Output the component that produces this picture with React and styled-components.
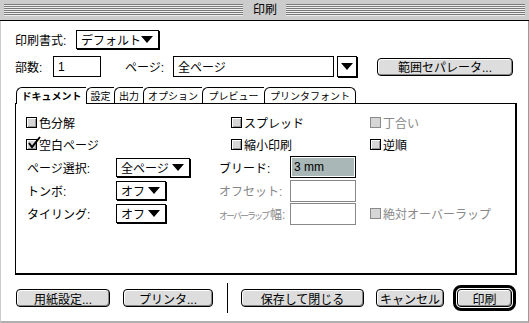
import React from "react";
import styled, { createGlobalStyle } from "styled-components";

const GlobalStyle = createGlobalStyle`
  html, body {
    margin: 0;
    padding: 0;
    background: #fff;
  }
  body {
    font-family: "Liberation Sans", "Noto Sans CJK JP", sans-serif;
    font-size: 12px;
    color: #000;
  }
`;

function Checkbox({ label, checked, disabled }) {
  return (
    <Check disabled={disabled}>
      <Box disabled={disabled}>
        {checked && (
          <Tick viewBox="0 0 14 14" width="14" height="14">
            <path d="M2 7 L5 11 L13 1" fill="none" stroke="#000" strokeWidth="2" />
          </Tick>
        )}
      </Box>
      {label}
    </Check>
  );
}

function Select({ value, width }) {
  return (
    <Popup width={width}>
      <span>{value}</span>
      <Arrow />
    </Popup>
  );
}

const tabs = [
  { name: "ドキュメント", width: 70, active: true },
  { name: "設定", width: 28 },
  { name: "出力", width: 29 },
  { name: "オプション", width: 59 },
  { name: "プレビュー", width: 62 },
  { name: "プリンタフォント", width: 92 },
];

function App() {
  return (
    <Window>
      <GlobalStyle />
      <TitleBar>
        <Stripes />
        <Title>印刷</Title>
        <Stripes />
      </TitleBar>
      <Body>
        <Row top={9}>
          <Label width={61}>印刷書式:</Label>
          <Select value="デフォルト" width={83} />
        </Row>
        <Row top={7}>
          <Label width={38}>部数:</Label>
          <TextBox width={48}>1</TextBox>
          <Label width={48} style={{ marginLeft: 24 }}>ページ:</Label>
          <TextBox width={161}>全ページ</TextBox>
          <ArrowBox>
            <Arrow />
          </ArrowBox>
          <Button width={136} style={{ marginLeft: 20 }}>範囲セパレータ...</Button>
        </Row>
        <TabBar>
          {tabs.map((t, i) => (
            <Tab key={t.name} width={t.width} active={t.active} last={i === tabs.length - 1}>
              {t.name}
            </Tab>
          ))}
        </TabBar>
        <Panel>
          <Grid>
            <Cell><Checkbox label="色分解" /></Cell>
            <Cell><Checkbox label="スプレッド" /></Cell>
            <Cell><Checkbox label="丁合い" disabled /></Cell>

            <Cell><Checkbox label="空白ページ" checked /></Cell>
            <Cell><Checkbox label="縮小印刷" /></Cell>
            <Cell><Checkbox label="逆順" /></Cell>

            <Cell>
              <FieldLabel width={90}>ページ選択:</FieldLabel>
              <Select value="全ページ" width={74} />
            </Cell>
            <Cell outdent>
              <FieldLabel width={72}>ブリード:</FieldLabel>
              <Input selected>3 mm</Input>
            </Cell>
            <Cell />

            <Cell>
              <FieldLabel width={90}>トンボ:</FieldLabel>
              <Select value="オフ" width={50} />
            </Cell>
            <Cell outdent>
              <FieldLabel width={72} disabled>オフセット:</FieldLabel>
              <Input disabled />
            </Cell>
            <Cell />

            <Cell>
              <FieldLabel width={90}>タイリング:</FieldLabel>
              <Select value="オフ" width={50} />
            </Cell>
            <Cell outdent>
              <FieldLabel width={72} disabled>
                <Tiny>オーバーラップ</Tiny>幅:
              </FieldLabel>
              <Input disabled />
            </Cell>
            <Cell><Checkbox label="絶対オーバーラップ" disabled /></Cell>
          </Grid>
        </Panel>
        <ButtonRow>
          <Button width={94}>用紙設定...</Button>
          <Button width={90} style={{ marginLeft: 13 }}>プリンタ...</Button>
          <Separator />
          <Button width={123}>保存して閉じる</Button>
          <Button width={68} style={{ marginLeft: 12 }}>キャンセル</Button>
          <DefaultRing>
            <Button width={55}>印刷</Button>
          </DefaultRing>
        </ButtonRow>
      </Body>
    </Window>
  );
}

export default App;

const Window = styled.div`
  width: 529px;
  height: 323px;
  box-sizing: border-box;
  display: flex;
  flex-direction: column;
  overflow: hidden;
`;

const TitleBar = styled.div`
  height: 20px;
  flex: none;
  background: #cccccc;
  border-bottom: 1px solid #000;
  display: flex;
  align-items: center;
  padding: 0 4px;
`;

const Stripes = styled.div`
  flex: 1;
  height: 12px;
  background: repeating-linear-gradient(to bottom, #7a7a7a 0 1px, #eeeeee 1px 2px);
`;

const Title = styled.div`
  padding: 0 9px 0 10px;
  font-size: 12px;
  line-height: 1;
`;

const Body = styled.div`
  flex: 1;
  background: #fff;
  border-left: 1px solid #cccccc;
  border-right: 1px solid #9a9a9a;
  border-bottom: 2px solid #b0b0b0;
  padding-left: 14px;
  display: flex;
  flex-direction: column;
`;

const Row = styled.div`
  display: flex;
  align-items: center;
  margin-top: ${(p) => p.top}px;
`;

const Label = styled.div`
  width: ${(p) => p.width}px;
  flex: none;
  white-space: nowrap;
`;

const Popup = styled.div`
  width: ${(p) => p.width}px;
  height: 19px;
  box-sizing: border-box;
  border: 1px solid #000;
  box-shadow: 1px 1px 0 #000;
  background: #fff;
  display: flex;
  align-items: center;
  justify-content: space-between;
  padding: 0 5px 0 4px;
  white-space: nowrap;
  flex: none;
`;

const Arrow = styled.span`
  width: 0;
  height: 0;
  border-left: 6px solid transparent;
  border-right: 6px solid transparent;
  border-top: 7px solid #000;
`;

const TextBox = styled.div`
  width: ${(p) => p.width}px;
  height: 21px;
  box-sizing: border-box;
  border: 1px solid #000;
  padding-left: 4px;
  display: flex;
  align-items: center;
  flex: none;
`;

const ArrowBox = styled.div`
  width: 20px;
  height: 21px;
  margin-left: 3px;
  box-sizing: border-box;
  border: 1px solid #000;
  box-shadow: 1px 1px 0 #000;
  display: flex;
  align-items: center;
  justify-content: center;
  flex: none;
`;

const Button = styled.div`
  width: ${(p) => p.width}px;
  height: 18px;
  box-sizing: border-box;
  border: 1px solid #000;
  border-radius: 4px;
  background: #dddddd;
  box-shadow: inset 1px 1px 0 #fff, inset -1px -1px 0 #888;
  display: flex;
  align-items: center;
  justify-content: center;
  white-space: nowrap;
  flex: none;
`;

const TabBar = styled.div`
  display: flex;
  align-items: flex-end;
  height: 16px;
  margin: 10px 0 0 1px;
`;

const Tab = styled.div`
  width: ${(p) => p.width}px;
  height: ${(p) => (p.active ? 17 : 16)}px;
  margin-bottom: ${(p) => (p.active ? -1 : 0)}px;
  box-sizing: border-box;
  border-top: 1px solid #000;
  border-left: 1px solid #000;
  border-right: ${(p) => (p.last ? "1px solid #000" : "none")};
  border-top-left-radius: 6px;
  border-top-right-radius: ${(p) => (p.last ? 6 : 0)}px;
  background: #fff;
  position: relative;
  z-index: ${(p) => (p.active ? 1 : 0)};
  font-size: 10px;
  font-weight: ${(p) => (p.active ? 700 : 400)};
  display: flex;
  align-items: center;
  justify-content: center;
  padding-bottom: ${(p) => (p.active ? 1 : 0)}px;
  white-space: nowrap;
`;

const Panel = styled.div`
  width: 502px;
  height: 172px;
  box-sizing: border-box;
  border-top: 1px solid #000;
  border-left: 1px solid #000;
  border-right: 2px solid #000;
  border-bottom: 2px solid #000;
`;

const Grid = styled.div`
  display: grid;
  grid-template-columns: 205px 139px 1fr;
  grid-template-rows: 22px 22px 24px 23px 23px;
  padding: 7px 0 0 10px;
`;

const Cell = styled.div`
  display: flex;
  align-items: center;
  margin-left: ${(p) => (p.outdent ? -13 : 0)}px;
`;

const Check = styled.div`
  display: flex;
  align-items: center;
  gap: 2px;
  color: ${(p) => (p.disabled ? "#888" : "#000")};
  white-space: nowrap;
`;

const Box = styled.span`
  width: 11px;
  height: 11px;
  box-sizing: border-box;
  border: 1px solid ${(p) => (p.disabled ? "#8a8a8a" : "#000")};
  background: #d6d6d6;
  box-shadow: ${(p) => (p.disabled ? "none" : "inset 1px 1px 0 #fff, inset -1px -1px 0 #999")};
  position: relative;
  flex: none;
`;

const Tick = styled.svg`
  position: absolute;
  left: 0;
  top: -4px;
`;

const FieldLabel = styled.div`
  width: ${(p) => p.width}px;
  flex: none;
  padding-left: 1px;
  box-sizing: border-box;
  color: ${(p) => (p.disabled ? "#888" : "#000")};
  white-space: nowrap;
`;

const Tiny = styled.span`
  font-size: 9px;
  letter-spacing: -2px;
  margin-right: 2px;
`;

const Input = styled.div`
  width: 66px;
  height: 22px;
  box-sizing: border-box;
  border: 1px solid ${(p) => (p.disabled ? "#888" : "#000")};
  padding: 1px;
  display: flex;
  flex: none;

  ${(p) =>
    p.selected &&
    `
    background: #aab7b7;
    box-shadow: inset 0 0 0 1px #fff;
    align-items: center;
    padding-left: 3px;
  `}
`;

const ButtonRow = styled.div`
  display: flex;
  align-items: center;
  height: 30px;
  margin: 8px 0 0 1px;
`;

const Separator = styled.div`
  width: 1px;
  height: 30px;
  background: #000;
  margin: 0 13px 0 14px;
  flex: none;
`;

const DefaultRing = styled.div`
  margin-left: 9px;
  border: 3px solid #000;
  border-radius: 8px;
  padding: 1px;
  flex: none;
`;
